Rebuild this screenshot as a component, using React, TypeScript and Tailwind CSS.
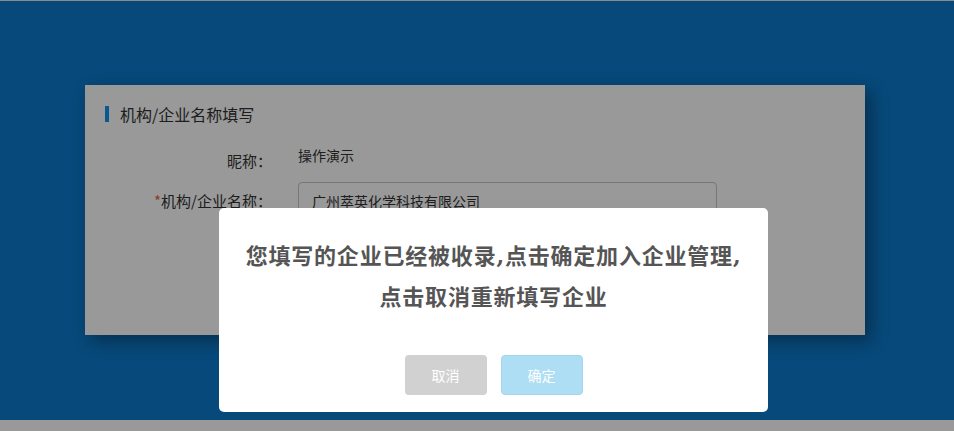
import React from 'react';

const App = () => {
  return (
    <div className="relative h-[431px] w-full overflow-hidden bg-white font-['Noto_Sans_CJK_SC',sans-serif]">
      <div className="h-[1px] bg-[#e6e6e6]" />
      <div className="h-[419px] bg-[#0c7acb] pt-[84px]">
        <div className="ml-[85px] h-[250px] w-[780px] bg-white px-[20px] pt-[20px] shadow-[6px_6px_16px_rgba(0,0,0,0.35)]">
          <div className="flex items-center">
            <span className="h-[16px] w-[4px] bg-[#1690f0]" />
            <span className="ml-[11px] text-[16px] leading-[18px] text-[#333]">机构/企业名称填写</span>
          </div>
          <div className="mt-[22px] flex items-start text-[14px] text-[#333]">
            <div className="mt-[6px] w-[167px] text-right text-[15px] leading-[20px]">昵称：</div>
            <div className="ml-[26px] leading-[20px]">操作演示</div>
          </div>
          <div className="mt-[11px] flex items-center text-[14px] text-[#333]">
            <div className="w-[167px] text-right text-[15px] leading-[20px]">
              <span className="text-[#e8643c]">*</span>机构/企业名称：
            </div>
            <div className="ml-[26px] flex h-[38px] w-[419px] items-center rounded-[4px] border border-[#c6c6c6] px-[13px]">
              广州萃英化学科技有限公司
            </div>
          </div>
        </div>
      </div>
      <div className="fixed inset-0 bg-black/40" />
      <div className="absolute left-[219px] top-[208px] flex h-[204px] w-[549px] flex-col items-center rounded-[5px] bg-white pt-[28px]">
        <p className="text-center font-['DejaVu_Serif','Noto_Sans_CJK_SC',serif] text-[22px] font-bold leading-[41px] tracking-[0.8px] text-[#555]">
          您填写的企业已经被收录,点击确定加入企业管理,
          <br />
          点击取消重新填写企业
        </p>
        <div className="mt-[37px] flex gap-[14px]">
          <button className="h-[40px] w-[82px] rounded-[4px] bg-[#d1d1d1] text-[14px] text-white">取消</button>
          <button className="h-[40px] w-[82px] rounded-[4px] border border-[#a3d6ef] bg-[#aedef4] text-[14px] text-white">确定</button>
        </div>
      </div>
    </div>
  );
};

export default App;
